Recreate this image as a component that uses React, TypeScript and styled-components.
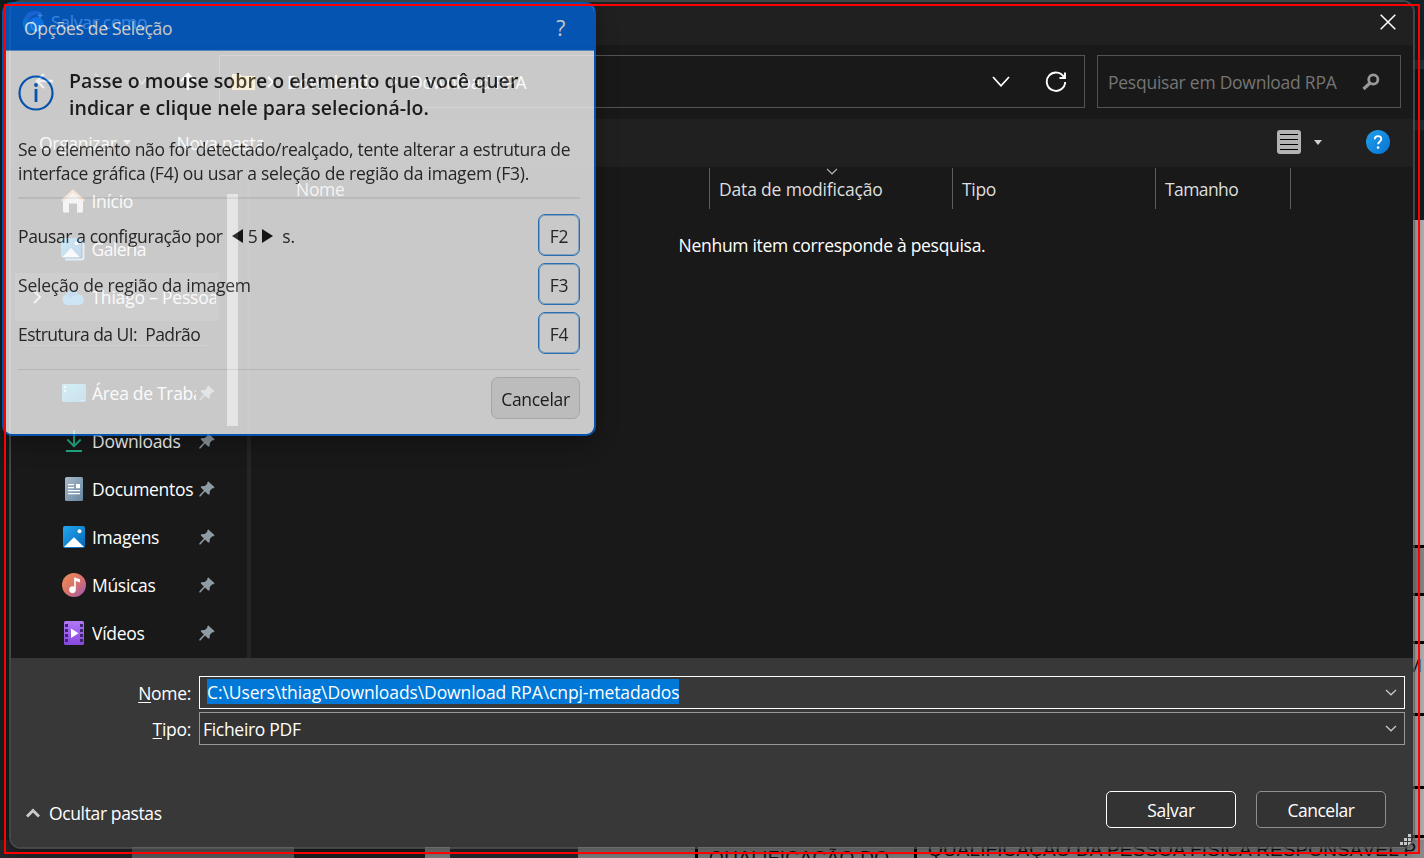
import React from "react";
import styled, { createGlobalStyle } from "styled-components";

const Global = createGlobalStyle`
  * { box-sizing: border-box; }
  body { margin: 0; overflow: hidden; background: #142022; }
  svg { display: block; flex: none; }
`;

const Desktop = styled.div`
  position: relative;
  width: 1424px;
  height: 858px;
  overflow: hidden;
  background: #14201f;
  color: #fff;
  font-family: "Open Sans", "Noto Sans", sans-serif;
  font-size: 17.5px;
  white-space: nowrap;
`;

const Label = styled.span<{ $ls?: number; $size?: number }>`
  letter-spacing: ${(p) => p.$ls ?? -0.3}px;
  font-size: ${(p) => p.$size ?? 17.5}px;
  line-height: 24px;
`;

/* ---- page behind the dialog ---- */
const Edge = styled.div`
  position: absolute;
  left: 1405px;
  top: 0;
  width: 19px;
  height: 858px;
  display: flex;
  flex-direction: column;
`;
const Strip = styled.div<{ $h: number; $c: string }>`
  flex: none;
  height: ${(p) => p.$h}px;
  background: ${(p) => p.$c};
`;
const Bottom = styled.div`
  position: absolute;
  left: 0;
  top: 840px;
  width: 1424px;
  height: 18px;
  display: flex;
  overflow: hidden;
`;
const Block = styled.div<{ $w: number; $c: string }>`
  flex: none;
  width: ${(p) => p.$w}px;
  background: ${(p) => p.$c};
`;
const PageText = styled.span<{ $x: number; $y: number; $ls?: number }>`
  position: absolute;
  left: ${(p) => p.$x}px;
  top: ${(p) => p.$y}px;
  font: 19px/24px "Liberation Sans", sans-serif;
  letter-spacing: ${(p) => p.$ls ?? 0}px;
  color: #141414;
`;

/* ---- save dialog ---- */
const SaveWindow = styled.div`
  position: absolute;
  left: 9px;
  top: 0;
  width: 1406px;
  height: 849px;
  border: 2px solid rgba(92, 94, 94, 0.65);
  border-radius: 12px;
  overflow: hidden;
  background: #191919;
  background-clip: padding-box;
  display: flex;
  flex-direction: column;
  box-shadow: 0 4px 14px rgba(0, 0, 0, 0.45);
`;
const TitleBar = styled.div`
  height: 43px;
  flex: none;
  background: #202020;
  display: flex;
  align-items: center;
  padding: 0 17px 3px 11px;
`;
const TitleText = styled(Label)`
  margin-left: 5px;
  flex: 1;
`;
const AddressRow = styled.div`
  height: 74px;
  flex: none;
  display: flex;
  align-items: center;
  padding: 0 12px 2px 20px;
`;
const NavIcons = styled.div`
  display: flex;
  width: 188px;
  padding-left: 3px;
  gap: 31px;
  align-items: center;
`;
const AddressBox = styled.div`
  width: 866px;
  height: 53px;
  border: 1px solid #535353;
  display: flex;
  align-items: center;
  padding: 1px 17px 0 12px;
`;
const Crumb = styled(Label)<{ $w: number }>`
  width: ${(p) => p.$w}px;
`;
const Spacer = styled.div`
  flex: 1;
`;
const SearchBox = styled.div`
  margin-left: 12px;
  width: 304px;
  height: 53px;
  border: 1px solid #535353;
  display: flex;
  align-items: center;
  justify-content: space-between;
  padding: 2px 20px 0 10px;
  color: #757575;
`;
const ToolBar = styled.div`
  height: 48px;
  flex: none;
  background: #202020;
  display: flex;
  align-items: center;
  padding: 0 23px 2px 28px;
`;
const MenuLabel = styled(Label)`
  padding-top: 2px;
`;
const Caret = styled.i<{ $m: string }>`
  border: 4.5px solid transparent;
  border-top: 5px solid #d0d0d0;
  border-bottom: 0;
  margin: ${(p) => p.$m};
`;
const Body = styled.div`
  height: 491px;
  flex: none;
  display: flex;
`;
const Sidebar = styled.div`
  width: 240px;
  height: 491px;
  padding: 10px 0 0 4px;
  border-right: 4px solid #252525;
  display: flex;
`;
const Tree = styled.div`
  width: 204px;
`;
const TreeRow = styled.div<{ $active?: boolean }>`
  height: 48px;
  display: flex;
  align-items: center;
  padding-left: 17px;
  background: ${(p) => (p.$active ? "#333333" : "transparent")};
`;
const Twist = styled.div`
  width: 30px;
`;
const TreeIcon = styled.div`
  width: 24px;
  height: 24px;
  margin-right: 6px;
`;
const TreeLabel = styled(Label)<{ $wide?: boolean }>`
  width: ${(p) => (p.$wide ? 127 : 104)}px;
  overflow: hidden;
  margin-right: 3px;
`;
const TreeDivider = styled.div`
  height: 48px;
  padding: 24px 11px 0;
  &::after {
    content: "";
    display: block;
    height: 1px;
    background: #3b3b3b;
  }
`;
const ScrollThumb = styled.div`
  width: 11px;
  height: 232px;
  margin: 17px 0 0 8px;
  background: #9b9b9b;
`;
const Files = styled.div`
  flex: 1;
`;
const Columns = styled.div`
  height: 42px;
  padding: 1px 0 0 28px;
  display: flex;
`;
const Column = styled.div<{ $w: number; $pad: number }>`
  width: ${(p) => p.$w}px;
  padding: 9px 0 0 ${(p) => p.$pad}px;
  border-right: 1px solid #5c5c5c;
  color: #dedede;
  display: flex;
  align-items: flex-start;
`;
const SortMark = styled.div`
  width: 0;
  margin: -9px 0 0 -57px;
`;
const Empty = styled.div`
  text-align: center;
  padding: 24px 0 0 0;
`;
const Footer = styled.div`
  flex: 1;
  background: #383838;
  padding: 18px 8px 0 0;
  display: flex;
  flex-direction: column;
`;
const FieldRow = styled.div`
  display: flex;
  height: 33px;
  margin-bottom: 3px;
`;
const FieldLabel = styled(Label)`
  width: 180px;
  text-align: right;
  margin-right: 8px;
  padding-top: 5px;
  text-underline-offset: 2px;
`;
const Field = styled.div<{ $focus?: boolean }>`
  flex: 1;
  border: 1px solid ${(p) => (p.$focus ? "#fff" : "#999")};
  background: ${(p) => (p.$focus ? "#383838" : "#333")};
  display: flex;
  align-items: center;
  justify-content: space-between;
  padding: 0 7px 0 ${(p) => (p.$focus ? 7 : 3)}px;
`;
const Selected = styled(Label)`
  background: #0078d7;
  height: 25px;
  line-height: 27px;
  margin-top: -2px;
`;
const Actions = styled.div`
  display: flex;
  align-items: center;
  margin-top: 43px;
  padding: 0 19px 0 15px;
`;
const FoldIcon = styled.div`
  margin-top: 6px;
`;
const Button = styled.div<{ $primary?: boolean }>`
  width: 130px;
  height: 37px;
  margin-left: 20px;
  border: 1px solid ${(p) => (p.$primary ? "#fff" : "#8f8f8f")};
  border-radius: 5px;
  background: #333;
  display: flex;
  align-items: center;
  justify-content: center;
`;
const HideFolders = styled(Label)`
  flex: 1;
  margin-left: 9px;
  padding-top: 6px;
`;
const Grip = styled.div`
  position: absolute;
  right: 2px;
  bottom: 2px;
`;

/* ---- selection options panel ---- */
const Panel = styled.div`
  position: absolute;
  left: 2px;
  top: 2px;
  width: 594px;
  height: 434px;
  border: 2px solid #0063d6;
  border-radius: 10px;
  overflow: hidden;
  opacity: 0.79;
  background: #f9f9f9;
  color: #1c1c1c;
  box-shadow: 0 8px 24px rgba(0, 0, 0, 0.4);
`;
const PanelHead = styled.div`
  height: 47px;
  background: #0063d9;
  border-bottom: 1px solid #6fa4e2;
  color: #f4f4f4;
  display: flex;
  justify-content: space-between;
  padding: 12px 29px 0 20px;
`;
const PanelBody = styled.div`
  padding: 16px 14px 0 14px;
`;
const Intro = styled.div`
  display: flex;
  gap: 15px;
  align-items: flex-start;
  height: 58px;
`;
const InfoIcon = styled.div`
  padding-top: 8px;
`;
const Heading = styled(Label)`
  display: block;
  font-weight: 600;
  line-height: 27px;
`;
const Para = styled.div`
  margin-top: 12px;
  height: 62px;
  border-bottom: 2px solid #e6e6e6;
  color: #2a2a2a;
`;
const ParaLine = styled(Label)`
  display: block;
`;
const Option = styled.div`
  height: 42px;
  margin-bottom: 7px;
  display: flex;
  align-items: center;
  justify-content: space-between;
  color: #2a2a2a;
`;
const Options = styled.div`
  padding-top: 15px;
  height: 171px;
  border-bottom: 1px solid #e0e0e0;
`;
const Key = styled.div`
  width: 42px;
  height: 42px;
  border: 1px solid #2f86d6;
  box-shadow: inset 0 0 0 1px #9cc6ec;
  border-radius: 7px;
  display: flex;
  align-items: center;
  justify-content: center;
  padding-top: 1px;
`;
const Inline = styled.div`
  display: flex;
  align-items: center;
  padding-top: 1px;
`;
const Arrow = styled.i<{ $left?: boolean }>`
  border: 7px solid transparent;
  ${(p) =>
    p.$left
      ? "border-right: 11px solid #151515; border-left: 0; margin: 0 5px 0 9px;"
      : "border-left: 11px solid #151515; border-right: 0; margin: 0 9px 0 5px;"}
`;
const CancelButton = styled.div`
  width: 89px;
  height: 42px;
  margin: 7px 0 0 auto;
  border: 1px solid #cbcbcb;
  border-radius: 7px;
  background: #e8e8e8;
  display: flex;
  align-items: center;
  justify-content: center;
  padding-top: 1px;
`;

const TargetFrame = styled.div`
  position: absolute;
  left: 4px;
  top: 4px;
  width: 1416px;
  height: 850px;
  border: 2px solid #f00;
`;

/* ---- icons ---- */
const Pin = () => (
  <svg width="16" height="16" viewBox="0 0 16 16">
    <path d="M9.4 0.4 15.6 6.3 14.3 7.4 13.2 7.3 10.8 10.1 10.6 13.2 9.2 13.4 6 10.5 1.4 15.4 0.3 15.4 0.4 14.3 4.9 9.5 1.8 6.5 2.1 5.2 5.8 5 8.3 2.7 8.2 1.5Z" fill="#8f9ba3" />
  </svg>
);
const Chevron = ({ w = 18, h = 10, s = 2, c = "#fff" }: { w?: number; h?: number; s?: number; c?: string }) => (
  <svg width={w} height={h} viewBox={`0 0 ${w} ${h}`}>
    <path d={`M1 1 L${w / 2} ${h - 1.2} L${w - 1} 1`} fill="none" stroke={c} strokeWidth={s} />
  </svg>
);
const Right = ({ c = "#ddd" }: { c?: string }) => (
  <svg width="10" height="14" viewBox="0 0 10 14">
    <path d="M2 1l6 6-6 6" fill="none" stroke={c} strokeWidth="2" />
  </svg>
);
const CrumbArrow = ({ x, w }: { x: number; w: number }) => (
  <svg width={w} height="14" viewBox={`0 0 ${w} 14`}>
    <path d={`M${x} 2l5 5-5 5`} fill="none" stroke="#fff" strokeWidth="2" />
  </svg>
);
const Picture = ({ stacked }: { stacked?: boolean }) => (
  <svg width="24" height="24" viewBox="0 0 24 24">
    <defs>
      <linearGradient id="pic" x2="1" y2="1">
        <stop stopColor="#22a7ee" />
        <stop offset="1" stopColor="#0567b8" />
      </linearGradient>
    </defs>
    {stacked && <path d="M4 22.5h16.500a2 2 0 0 0 2-2V4" fill="none" stroke="#83c4f3" strokeWidth="2" />}
    <rect x={stacked ? 0 : 1} y="1" width={stacked ? 20 : 22} height={stacked ? 20 : 22} rx="2" fill="url(#pic)" />
    {stacked ? <path d="M1.500 20 10 11l8.500 9z" fill="#fff" /> : <path d="M2 22 12 12.300 22 22z" fill="#fff" />}
    <circle cx={stacked ? 15.5 : 17.5} cy="6.200" r="2" fill="#fff" />
  </svg>
);
const icons: Record<string, React.ReactNode> = {
  home: (
    <svg width="24" height="24" viewBox="0 0 24 24">
      <path d="M2 10.500 12 2l10 8.500V22.500a1 1 0 0 1-1 1h-5v-9H8v9H3a1 1 0 0 1-1-1z" fill="#e4e4e4" />
      <path d="M1 12 12 2l11 10" fill="none" stroke="#f19a5b" strokeWidth="2.500" />
    </svg>
  ),
  gallery: <Picture stacked />,
  cloud: (
    <svg width="24" height="24" viewBox="0 0 24 24">
      <path d="M6 20a5.500 5.500 0 0 1-1-10.500 7 7 0 0 1 12.500 0A5.300 5.300 0 0 1 18.500 20z" fill="#2aa2ea" />
      <path d="M5 9.500a7 7 0 0 1 12.500 0c-4 .2-6 2.500-8 4z" fill="#1379cf" />
    </svg>
  ),
  desk: (
    <svg width="24" height="24" viewBox="0 0 24 24">
      <defs>
        <linearGradient id="desk" x2="1" y2="1">
          <stop stopColor="#48cfe8" />
          <stop offset="1" stopColor="#2382be" />
        </linearGradient>
      </defs>
      <rect y="3" width="24" height="18" rx="1.500" fill="url(#desk)" />
      <path d="M2 5h2v2H2zM2 9h2v2H2zM19 19h1v1h-1zM21 19h1v1h-1z" fill="#fff" />
    </svg>
  ),
  down: (
    <svg width="24" height="24" viewBox="0 0 24 24">
      <path d="M12 1v16M5.300 10.500 12 17.200l6.700-6.700M4 22h16" fill="none" stroke="#23b08a" strokeWidth="2" />
    </svg>
  ),
  doc: (
    <svg width="24" height="24" viewBox="0 0 24 24">
      <defs>
        <linearGradient id="doc" x2="1" y2="1">
          <stop stopColor="#a9bccb" />
          <stop offset="1" stopColor="#6684a0" />
        </linearGradient>
      </defs>
      <rect x="3" width="18" height="24" rx="1.500" fill="url(#doc)" />
      <path d="M6 7h6v1.300H6zM6 10h6v1.300H6zM14 7h4v4.300h-4zM6 13h12v1.300H6zM6 16h12v1.300H6z" fill="#fff" />
    </svg>
  ),
  image: <Picture />,
  music: (
    <svg width="24" height="24" viewBox="0 0 24 24">
      <defs>
        <linearGradient id="mus" x2="1" y2="1">
          <stop stopColor="#f09050" />
          <stop offset=".55" stopColor="#d5706f" />
          <stop offset="1" stopColor="#9a55ba" />
        </linearGradient>
      </defs>
      <circle cx="12" cy="12" r="12" fill="url(#mus)" />
      <path d="M12.200 4.300 18 6.200v3.200l-4.200-1.300V16a3.400 3.400 0 1 1-1.600-2.200z" fill="#fff" />
    </svg>
  ),
  video: (
    <svg width="24" height="24" viewBox="0 0 24 24">
      <defs>
        <linearGradient id="vid" x2="0" y2="1">
          <stop stopColor="#b078f4" />
          <stop offset="1" stopColor="#8748df" />
        </linearGradient>
      </defs>
      <rect x="2" width="20" height="24" rx="1.500" fill="url(#vid)" />
      <path d="M3 3h3v3H3zM3 8h3v3H3zM3 13h3v3H3zM3 18h3v3H3zM18 3h3v3h-3zM18 8h3v3h-3zM18 13h3v3h-3zM18 18h3v3h-3z" fill="#3f2470" />
      <path d="M9 7.500v9.500l7.500-4.700z" fill="#fff" />
    </svg>
  ),
};

type Item = { icon: string; text: string; pin?: boolean; ls?: number };
const places: Item[] = [
  { icon: "desk", text: "Área de Trabalho", pin: true },
  { icon: "down", text: "Downloads", pin: true },
  { icon: "doc", text: "Documentos", pin: true },
  { icon: "image", text: "Imagens", pin: true },
  { icon: "music", text: "Músicas", pin: true },
  { icon: "video", text: "Vídeos", pin: true },
];
const Place = ({ item, active }: { item: Item; active?: boolean }) => (
  <TreeRow $active={active}>
    <Twist>{active && <Right />}</Twist>
    <TreeIcon>{icons[item.icon]}</TreeIcon>
    <TreeLabel $wide={!item.pin} $ls={item.ls}>{item.text}</TreeLabel>
    {item.pin && <Pin />}
  </TreeRow>
);

export default function App() {
  return (
    <Desktop>
      <Global />
      <Edge>
        <Strip $h={60} $c="#11232a" />
        <Strip $h={9} $c="#203337" />
        <Strip $h={51} $c="#0d1d20" />
        <Strip $h={10} $c="#1c2f32" />
        <Strip $h={90} $c="#13201f" />
        <Strip $h={325} $c="#b4b4b4" />
        <Strip $h={3} $c="#000" />
        <Strip $h={45} $c="#8a8a8a" />
        <Strip $h={3} $c="#000" />
        <Strip $h={45} $c="#b4b4b4" />
        <Strip $h={3} $c="#000" />
        <Strip $h={69} $c="#b4b4b4" />
        <Strip $h={3} $c="#000" />
        <Strip $h={70} $c="#b4b4b4" />
        <Strip $h={3} $c="#000" />
        <Strip $h={46} $c="#b4b4b4" />
        <Strip $h={3} $c="#000" />
        <Strip $h={21} $c="#a5a5a5" />
      </Edge>
      <Bottom>
        <Block $w={132} $c="#252728" />
        <Block $w={162} $c="#606060" />
        <Block $w={131} $c="#202020" />
        <Block $w={25} $c="#888888" />
        <Block $w={128} $c="#2a2c2d" />
        <Block $w={117} $c="#888888" />
        <Block $w={3} $c="#000" />
        <Block $w={216} $c="#888888" />
        <Block $w={3} $c="#000" />
        <Block $w={507} $c="#8c8c8c" />
      </Bottom>
      <PageText $x={709} $y={846} $ls={0.35}>QUALIFICAÇÃO DO</PageText>
      <PageText $x={928} $y={838} $ls={0.1}>QUALIFICAÇÃO DA PESSOA FÍSICA RESPONSÁVEL P</PageText>
      <PageText $x={1406} $y={654}>M</PageText>

      <SaveWindow>
        <TitleBar>
          <svg width="24" height="24" viewBox="0 0 24 24">
            <path d="M20 3A12 12 0 1 0 6 22.500l4-4A8 8 0 0 1 12 5z" fill="#7a5bb5" />
            <path d="M1 10a12 12 0 0 0 7 13.300l3-5C5 17 4 12 5 8z" fill="#28b4a0" />
            <circle cx="14.500" cy="14.500" r="7.500" fill="#3fa0f4" />
            <path d="M12 11a5 5 0 1 0 7 6" fill="none" stroke="#fff" strokeWidth="1.500" />
            <path d="M18 3v5M15.500 5.500h5" stroke="#fff" strokeWidth="1.500" />
          </svg>
          <TitleText>Salvar como</TitleText>
          <svg width="16" height="16" viewBox="0 0 16 16">
            <path d="M.7.7l14.600 14.600M15.300.7.7 15.300" stroke="#fff" strokeWidth="1.500" />
          </svg>
        </TitleBar>
        <AddressRow>
          <NavIcons>
            <svg width="20" height="18" viewBox="0 0 20 18"><path d="M19 9H3M10 2 3 9l7 7" fill="none" stroke="#ccc" strokeWidth="2.400" /></svg>
            <svg width="20" height="18" viewBox="0 0 20 18"><path d="M1 9h16M10 2l7 7-7 7" fill="none" stroke="#777" strokeWidth="2.400" /></svg>
            <Chevron w={12} h={8} c="#888" />
            <svg width="18" height="20" viewBox="0 0 18 20"><path d="M9 19V3M2 10l7-7 7 7" fill="none" stroke="#fff" strokeWidth="2.400" /></svg>
          </NavIcons>
          <AddressBox>
            <svg width="23" height="18" viewBox="0 0 23 18">
              <path d="M0 1h8l2 2h13v14H0z" fill="#f8d070" />
            </svg>
            <Crumb $w={32}><CrumbArrow x={13} w={32} /></Crumb>
            <Crumb $w={88} $ls={-0.2}>Downloads</Crumb>
            <Crumb $w={35}><CrumbArrow x={16} w={35} /></Crumb>
            <Label>Download RPA</Label>
            <Spacer />
            <Chevron w={18} h={11} s={1.7} />
            <svg width="22" height="22" viewBox="0 0 22 22" style={{ marginLeft: 35 }}>
              <path d="M19.200 6.500A9.200 9.200 0 1 0 20.200 11M20 1.500V7h-5.500" fill="none" stroke="#fff" strokeWidth="1.900" />
            </svg>
          </AddressBox>
          <SearchBox>
            <Label $ls={-0.25}>Pesquisar em Download RPA</Label>
            <svg width="18" height="18" viewBox="0 0 18 18">
              <circle cx="11.300" cy="6.500" r="4.600" fill="none" stroke="#999" strokeWidth="2.800" />
              <path d="M8 10 1.500 16" stroke="#999" strokeWidth="3.200" />
            </svg>
          </SearchBox>
        </AddressRow>
        <ToolBar>
          <MenuLabel>Organizar</MenuLabel>
          <Caret $m="0 46px 0 6px" />
          <MenuLabel>Nova pasta</MenuLabel>
          <Spacer />
          <svg width="24" height="24" viewBox="0 0 24 24">
            <rect width="24" height="24" rx="3" fill="#b3b3b3" />
            <path d="M3 4.500h18M3 9.500h18M3 14.500h18M3 19.500h18" stroke="#000" />
          </svg>
          <Caret $m="0 44px 0 13px" />
          <svg width="24" height="24" viewBox="0 0 24 24">
            <defs>
              <linearGradient id="help" x2="1" y2="1">
                <stop stopColor="#22a0e8" />
                <stop offset="1" stopColor="#0674d4" />
              </linearGradient>
            </defs>
            <circle cx="12" cy="12" r="12" fill="url(#help)" />
            <path d="M8.800 9.200c0-4 6.500-4 6.500-.2 0 2.300-3.200 2.600-3.200 5.300" fill="none" stroke="#fff" strokeWidth="1.900" />
            <circle cx="12.100" cy="17.600" r="1.300" fill="#fff" />
          </svg>
        </ToolBar>
        <Body>
          <Sidebar>
            <Tree>
              <Place item={{ icon: "home", text: "Início" }} />
              <Place item={{ icon: "gallery", text: "Galeria", ls: -0.5 }} />
              <Place active item={{ icon: "cloud", text: "Thiago – Pessoal", ls: -0.2 }} />
              <TreeDivider />
              {places.map((p) => <Place key={p.text} item={p} />)}
            </Tree>
            <ScrollThumb />
          </Sidebar>
          <Files>
            <Columns>
              <Column $w={431} $pad={17}><Label>Nome</Label></Column>
              <Column $w={243} $pad={9}>
                <Label $ls={-0.17}>Data de modificação</Label>
                <SortMark><Chevron w={12} h={7} s={1.2} c="#aaa" /></SortMark>
              </Column>
              <Column $w={203} $pad={9}><Label>Tipo</Label></Column>
              <Column $w={135} $pad={9}><Label $ls={-0.6}>Tamanho</Label></Column>
            </Columns>
            <Empty><Label>Nenhum item corresponde à pesquisa.</Label></Empty>
          </Files>
        </Body>
        <Footer>
          <FieldRow>
            <FieldLabel><u>N</u>ome:</FieldLabel>
            <Field $focus>
              <Selected $ls={-0.1}>C:\Users\thiag\Downloads\Download RPA\cnpj-metadados</Selected>
              <Chevron w={12} h={7} s={1.2} c="#ccc" />
            </Field>
          </FieldRow>
          <FieldRow>
            <FieldLabel><u>T</u>ipo:</FieldLabel>
            <Field>
              <Label>Ficheiro PDF</Label>
              <Chevron w={12} h={7} s={1.2} c="#ccc" />
            </Field>
          </FieldRow>
          <Actions>
            <FoldIcon>
              <svg width="14" height="10" viewBox="0 0 14 10"><path d="M1 8.500 7 2.500l6 6" fill="none" stroke="#ccc" strokeWidth="3" /></svg>
            </FoldIcon>
            <HideFolders $ls={-0.37}>Ocultar pastas</HideFolders>
            <Button $primary><Label>Sa<u>l</u>var</Label></Button>
            <Button><Label $ls={-0.5}>Cancelar</Label></Button>
          </Actions>
        </Footer>
        <Grip>
          <svg width="11" height="11" viewBox="0 0 11 11">
            <path d="M0 8h3v3H0zM4 8h3v3H4zM8 8h3v3H8zM4 4h3v3H4zM8 4h3v3H8zM8 0h3v3H8z" fill="#c8c8c8" />
          </svg>
        </Grip>
      </SaveWindow>

      <Panel>
        <PanelHead>
          <Label $ls={-0.3}>Opções de Seleção</Label>
          <Label $size={21}>?</Label>
        </PanelHead>
        <PanelBody>
          <Intro>
            <InfoIcon>
              <svg width="36" height="36" viewBox="0 0 36 36">
                <circle cx="18" cy="18" r="16.500" fill="none" stroke="#0063d6" strokeWidth="2.200" />
                <path d="M18 14v13" stroke="#0063d6" strokeWidth="2.800" />
                <circle cx="18" cy="10" r="1.900" fill="#0063d6" />
              </svg>
            </InfoIcon>
            <div>
              <Heading $size={19.5} $ls={0.04}>Passe o mouse sobre o elemento que você quer</Heading>
              <Heading $size={19.5} $ls={0.04}>indicar e clique nele para selecioná-lo.</Heading>
            </div>
          </Intro>
          <Para>
            <ParaLine $ls={-0.32}>Se o elemento não for detectado/realçado, tente alterar a estrutura de</ParaLine>
            <ParaLine $ls={-0.23}>interface gráfica (F4) ou usar a seleção de região da imagem (F3).</ParaLine>
          </Para>
          <Options>
            <Option>
              <Inline>
                <Label $ls={-0.36}>Pausar a configuração por</Label>
                <Arrow $left />
                <Label>5</Label>
                <Arrow />
                <Label>s.</Label>
              </Inline>
              <Key><Label>F2</Label></Key>
            </Option>
            <Option>
              <Inline><Label $ls={-0.21}>Seleção de região da imagem</Label></Inline>
              <Key><Label>F3</Label></Key>
            </Option>
            <Option>
              <Inline><Label $ls={-0.54}>Estrutura da UI:&nbsp; Padrão</Label></Inline>
              <Key><Label>F4</Label></Key>
            </Option>
          </Options>
          <CancelButton><Label>Cancelar</Label></CancelButton>
        </PanelBody>
      </Panel>
      <TargetFrame />
    </Desktop>
  );
}
